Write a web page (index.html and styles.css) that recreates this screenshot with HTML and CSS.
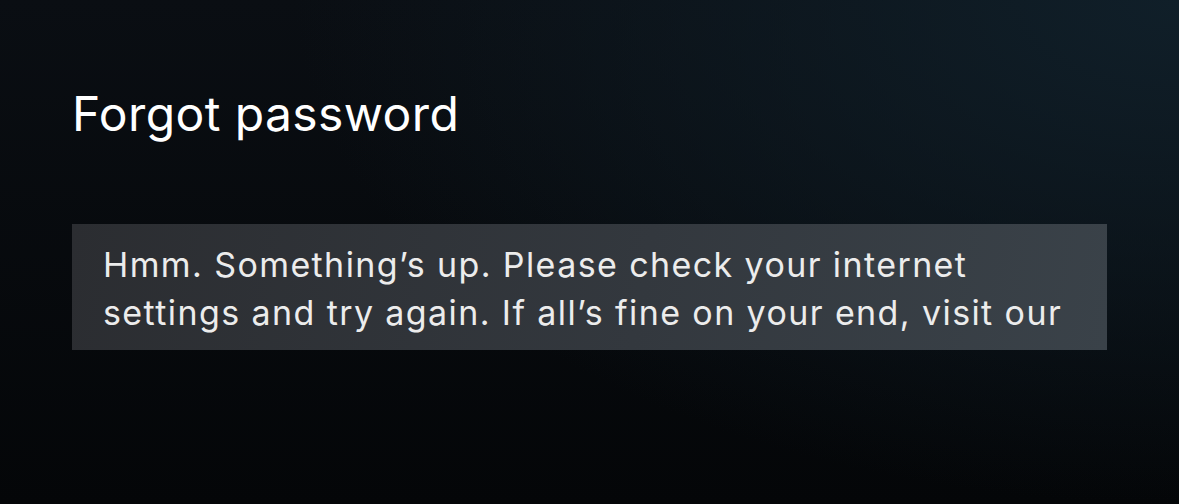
FILE: index.html
```html
<!DOCTYPE html>
<html lang="en">
<head>
<meta charset="utf-8">
<title>Forgot password</title>
<link rel="stylesheet" href="styles.css">
</head>
<body>
<main class="page">
  <h1 class="title">Forgot password</h1>
  <div class="alert">
    <p class="alert-text">Hmm. Something’s up. Please check your internet<br>settings and try again. If all’s fine on your end, visit our</p>
  </div>
</main>
</body>
</html>
```
FILE: styles.css
```css
html, body {
  margin: 0;
  height: 100%;
}
body {
  background:
    radial-gradient(ellipse 75% 100% at 100% 0%, rgba(16, 31, 41, 1) 0%, rgba(16, 31, 41, 0) 100%),
    linear-gradient(to bottom, #0a0e13 0%, #040608 100%);
  font-family: Inter, "Noto Sans", sans-serif;
  color: #fff;
  overflow: hidden;
}
.page {
  padding: 85px 72px 0;
}
.title {
  margin: 0;
  font-size: 48px;
  line-height: 58px;
  font-weight: 400;
  letter-spacing: 0.4px;
  color: #fff;
}
.alert {
  margin-top: 81px;
  height: 126px;
  box-sizing: border-box;
  padding: 17px 31px 0;
  overflow: hidden;
  background: linear-gradient(100deg, #2b2d31 0%, #33383e 55%, #3a4249 100%);
}
.alert-text {
  margin: 0;
  font-size: 34px;
  line-height: 48px;
  letter-spacing: 1.4px;
  color: #ececec;
  white-space: nowrap;
}
```
